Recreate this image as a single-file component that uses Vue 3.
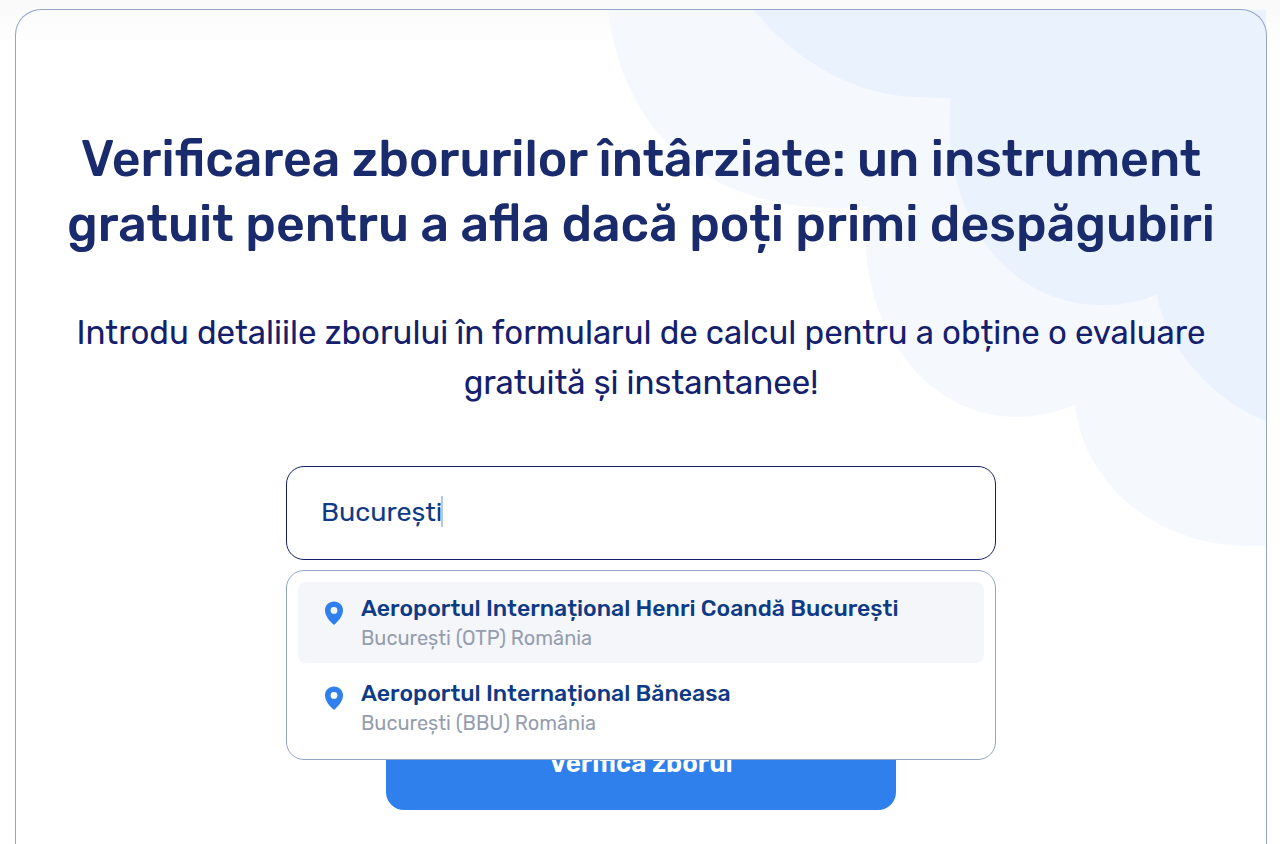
<script setup>
import { ref, computed } from 'vue'

const query = ref('București')
const selected = ref(0)
const airports = [
  { name: 'Aeroportul Internațional Henri Coandă București', city: 'București', code: 'OTP', country: 'România' },
  { name: 'Aeroportul Internațional Băneasa', city: 'București', code: 'BBU', country: 'România' },
]
const open = computed(() => query.value.length > 0)
</script>

<template>
  <main class="page">
    <section class="card">
      <svg class="clouds" viewBox="0 0 660 540" aria-hidden="true">
        <path
          fill="#f5f9fe"
          d="M2 0 C17 125 105 199 230 198 C250 198 262 196 262 196 C246 298 310 407 411 407 C432 407 452 402 469 395 C478 474 549 536 645 536 L660 536 V0Z"
        />
        <path
          fill="#eaf2fe"
          d="M148 0 C188 50 249 86 311 87 C323 88 335 88 345 88 C333 199 397 295 497 295 C519 295 537 291 551 284 C558 334 605 390 660 411 V0Z"
        />
      </svg>

      <h1 class="title">Verificarea zborurilor întârziate: un instrument gratuit pentru a afla dacă poți primi despăgubiri</h1>
      <p class="lead">Introdu detaliile zborului în formularul de calcul pentru a obține o evaluare gratuită și instantanee!</p>

      <form class="search" @submit.prevent>
        <div class="field">
          <input v-model="query" class="input" type="text" aria-label="Aeroport de plecare" autocomplete="off" />
          <span v-if="query === 'București'" class="caret" aria-hidden="true"></span>
          <ul v-if="open" class="options">
            <li v-for="(airport, i) in airports" :key="airport.code">
              <button type="button" class="option" :class="{ active: i === selected }" @click="selected = i">
                <svg class="pin" viewBox="0 0 18 24" aria-hidden="true">
                  <path
                    fill="#2f80ed"
                    fill-rule="evenodd"
                    d="M9 0.5C4 0.5 0 4.4 0 9.3C0 14.5 4.2 19.8 8.1 23.3Q9 24 9.9 23.3C13.8 19.8 18 14.5 18 9.3C18 4.4 14 0.5 9 0.5ZM9 6A3.4 3.4 0 1 1 9 12.8A3.4 3.4 0 1 1 9 6Z"
                  />
                </svg>
                <span class="text">
                  <span class="name">{{ airport.name }}</span>
                  <span class="place">{{ airport.city }} ({{ airport.code }}) {{ airport.country }}</span>
                </span>
              </button>
            </li>
          </ul>
        </div>
        <button class="submit" type="submit">Verifică zborul</button>
      </form>
    </section>
  </main>
</template>

<style>
body {
  background: #fff;
}
</style>

<style scoped>
.page,
.page * {
  box-sizing: border-box;
}

.page {
  min-height: 100vh;
  padding: 9px 13px 0 15px;
  display: flex;
  isolation: isolate;
  background: linear-gradient(#f9f9f9, #fff 48px);
  font-family: Rubik, Roboto, "Noto Sans", sans-serif;
  color: #1a2b6d;
}

.card {
  position: relative;
  flex: 1;
  padding: 117px 40px 33px;
  border: 1px solid #93a6c6;
  border-bottom: 0;
  border-radius: 26px 26px 0 0;
  text-align: center;
}

.clouds {
  position: absolute;
  z-index: -1;
  top: 0;
  right: 0;
  width: 660px;
  height: 540px;
}

.title {
  margin: 0;
  font-size: 50px;
  line-height: 65px;
  font-weight: 500;
}

.lead {
  margin: 51px 0 0;
  font-size: 33px;
  line-height: 50px;
  color: #14206e;
}

.search {
  width: 100%;
  max-width: 710px;
  margin: 58px auto 0;
}

.field {
  position: relative;
  z-index: 1;
}

.input {
  display: block;
  width: 100%;
  height: 94px;
  padding: 0 34px 2px;
  border: 1px solid #14206e;
  border-radius: 18px;
  background: #fff;
  font: inherit;
  font-size: 27px;
  color: #0f3a85;
  outline: none;
}

.caret {
  position: absolute;
  top: 30px;
  left: 155px;
  width: 2px;
  height: 31px;
  background: #b7c6e2;
}

.options {
  position: absolute;
  top: 104px;
  left: 0;
  right: 0;
  margin: 0;
  padding: 11px;
  display: grid;
  gap: 4px;
  list-style: none;
  border: 1px solid #93a6c6;
  border-radius: 18px;
  background: #fff;
}

.option {
  display: flex;
  align-items: flex-start;
  gap: 18px;
  width: 100%;
  height: 81px;
  padding: 11px 27px 0;
  border: 0;
  border-radius: 8px;
  background: none;
  font: inherit;
  text-align: left;
}

.option.active {
  background: #f4f6f9;
}

.pin {
  flex: none;
  width: 18px;
  height: 24px;
  margin-top: 8px;
}

.text {
  display: grid;
}

.name {
  font-size: 23px;
  line-height: 30px;
  font-weight: 500;
  color: #0f3a85;
}

.place {
  font-size: 20px;
  line-height: 30px;
  color: #959daf;
}

.submit {
  display: block;
  width: 510px;
  max-width: 100%;
  height: 94px;
  margin: 156px auto 0;
  border: 0;
  border-radius: 18px;
  background: #2f80ed;
  font: inherit;
  font-size: 26px;
  font-weight: 600;
  color: #fff;
}
</style>
